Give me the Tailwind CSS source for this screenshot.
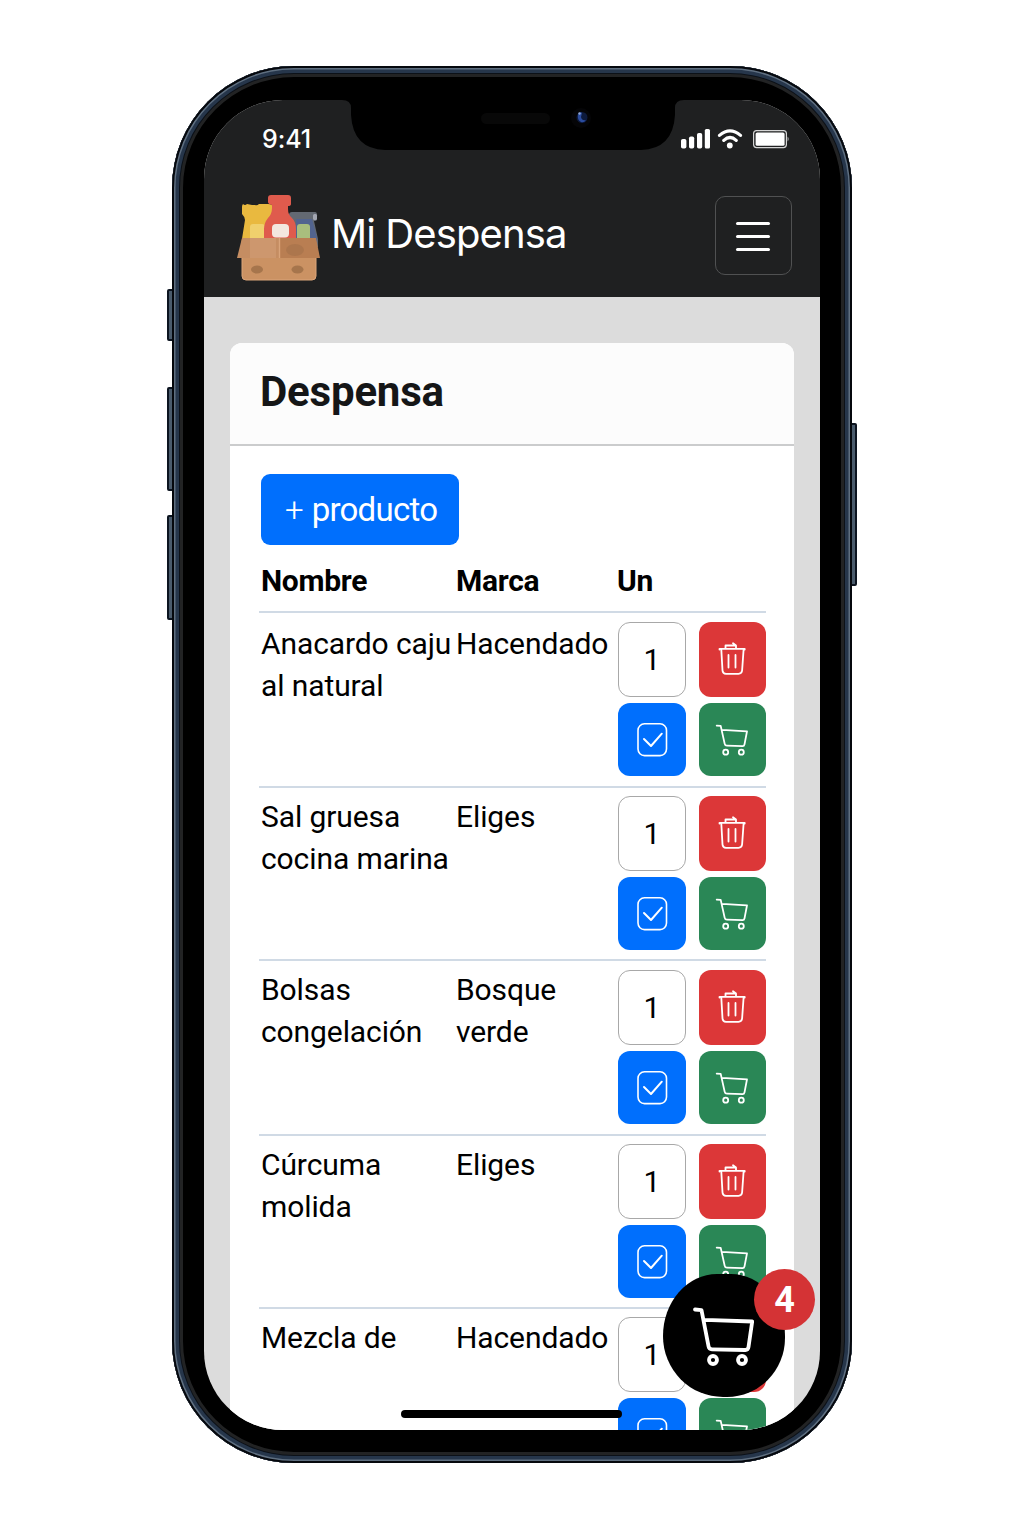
<!DOCTYPE html>
<html lang="es">
<head>
<meta charset="utf-8">
<title>Mi Despensa</title>
<script src="https://cdn.jsdelivr.net/npm/@tailwindcss/browser@4"></script>
</head>
<body class="bg-white">
<main class="flex h-[1536px] w-[1024px] justify-center overflow-hidden bg-white pt-[66px] font-['Roboto',sans-serif] text-black">
  <div class="relative h-[1397px] w-[680px]">
    <!-- side keys -->
    <div class="absolute left-[-5px] top-[223px] h-[52px] w-[8px] rounded-xs border-2 border-[#0c1420] bg-[#4a5b6c]"></div>
    <div class="absolute left-[-5px] top-[321px] h-[104px] w-[8px] rounded-xs border-2 border-[#0c1420] bg-[#4a5b6c]"></div>
    <div class="absolute left-[-5px] top-[449px] h-[105px] w-[8px] rounded-xs border-2 border-[#0c1420] bg-[#4a5b6c]"></div>
    <div class="absolute right-[-5px] top-[357px] h-[163px] w-[8px] rounded-xs border-2 border-[#0c1420] bg-[#4a5b6c]"></div>
    <!-- body -->
    <div class="relative h-full w-full rounded-[122px] bg-black px-8 pb-[33px] pt-[34px] shadow-[inset_0_0_0_2px_#05080d,inset_0_0_0_3.5px_#5f6f80,inset_0_0_0_7px_#26364b,inset_0_0_0_8px_#0c1118,inset_0_0_0_11px_#222324]">
      <div class="relative flex h-[1330px] flex-col overflow-hidden rounded-[79px] bg-[#dcdcdc]">
        <header class="flex h-[197px] shrink-0 flex-col bg-[#1f2021] text-white">
          <div class="flex h-[78px] items-center justify-between pl-[58px] pr-[30px]">
            <span class="pt-[1px] font-['Inter',sans-serif] text-[25px] font-medium leading-none tracking-[-0.1px]">9:41</span>
            <svg class="h-5 w-[110px]" viewBox="680 129 110 20" fill="#fff">
              <rect x="681" y="139" width="5.4" height="9.5" rx="1.8"/><rect x="689" y="136.5" width="5.2" height="12" rx="1.8"/><rect x="697" y="133" width="5.2" height="15.5" rx="1.8"/><rect x="704.8" y="129" width="5.2" height="19.5" rx="1.6"/>
              <path d="M719.5 135.4Q730 126.2 740.5 135.4M723.8 140.4Q730 134.6 736.2 140.4" fill="none" stroke="#fff" stroke-width="3.2" stroke-linecap="round"/>
              <circle cx="729.8" cy="145.5" r="2.9"/>
              <rect x="753.6" y="130.6" width="32.8" height="17" rx="3" fill="none" stroke="#d5d5d5" stroke-width="1.2"/><rect x="755.6" y="132.4" width="29" height="13.4" rx="1.6"/><path d="M787.6 136.6q2 2.4 0 5z" fill="#ccc"/>
            </svg>
          </div>
          <div class="flex h-[119px] items-start justify-between pl-8 pr-7">
            <div class="flex items-center pt-[16px]">
              <svg class="h-[88px] w-[84px]" viewBox="236 194 84 88">
                <path d="M289 215q0-3 3-3h23q2 0 2 3v4q0 2-3 2l4 18v8h-29z" fill="#636972"/>
                <path d="M296 219h16l5 19v4h-21z" fill="#52648f"/>
                <rect x="313" y="214" width="4" height="6" rx="1.5" fill="#a2a6b1"/>
                <path d="M243 204q2 2 4 0l5 1 3 0q2 1 4-1h9q5 0 5 4v7l-3 6v24h-29l4-25q0-3-3-6v-7q0-2 1-3z" fill="#e9b93f"/>
                <rect x="250" y="224" width="15" height="20" rx="3" fill="#f0d06d"/>
                <rect x="297" y="224" width="13" height="20" rx="3" fill="#a9be7d"/>
                <path d="M271 195h17q3 0 3 3v6q0 2-3 2v3q0 6 4 9 4 4 4 11v10h-32v-10q0-6 4-11 4-4 4-10v-3q-4-1-4-3v-4q0-3 3-3z" fill="#df5b4d"/>
                <rect x="272" y="224" width="17" height="13.500" rx="4" fill="#f3e7df"/>
                <path d="M242 256h74v20q0 4-4 4h-66q-4 0-4-4z" fill="#cb9263" stroke="#dba57a" stroke-width="1"/>
                <path d="M242 238h37v20h-42z" fill="#c58d62"/><path d="M279 238h37l4 20h-41z" fill="#b97e52"/>
                <path d="M250 238h26v20h-26z" fill="#d3a078" opacity=".55"/>
                <path d="M279.500 238v20" stroke="#d9a47a" stroke-width="1.4"/>
                <ellipse cx="295" cy="250" rx="9" ry="6" fill="#9d6c48" opacity=".45"/>
                <ellipse cx="257" cy="269.500" rx="6" ry="4" fill="#a6754c"/><ellipse cx="297.500" cy="269.500" rx="6" ry="4" fill="#a6754c"/>
              </svg>
              <span class="ml-[11px] -mt-[8px] font-['Inter',sans-serif] text-[40px] leading-none tracking-[-0.9px]">Mi Despensa</span>
            </div>
            <button class="mt-[18px] flex h-[79px] w-[77px] flex-col items-center justify-center gap-[10px] rounded-[10px] border border-[#505152] pt-[1px] pr-[1px]">
              <span class="h-[3px] w-[34px] rounded-full bg-white"></span><span class="h-[3px] w-[34px] rounded-full bg-white"></span><span class="h-[3px] w-[34px] rounded-full bg-white"></span>
            </button>
          </div>
        </header>
        <section class="mx-[26px] mt-[46px] flex h-[1100px] shrink-0 flex-col overflow-hidden rounded-t-xl bg-white">
          <h1 class="flex h-[103px] shrink-0 items-center border-b-2 border-[#cbcccd] bg-[#fcfcfc] pl-[30px] pb-[4px] text-[42px] font-bold leading-none tracking-[-0.2px] text-[#151617]">Despensa</h1>
          <div class="flex flex-col pl-[29px] pr-7 pt-7">
            <button class="ml-[2px] flex h-[71px] w-[198px] items-center rounded-[9px] bg-[#006ffd] pl-[24px] text-[33px] leading-none text-white"><span class="mr-[8px] font-light">+</span><span class="tracking-[-0.75px]">producto</span></button>
            <div class="flex h-[66px] items-center pt-[5px] text-[30px] font-bold leading-none tracking-[-0.3px]">
              <span class="w-[197px] pl-[2px]">Nombre</span><span class="w-[161px]">Marca</span><span>Un</span>
            </div>
            <div id="rows" class="flex flex-col text-[30px] leading-[42.4px] tracking-[-0.1px]"></div>
          </div>
        </section>
        <!-- display cut-out -->
        <svg class="absolute left-[138px] top-0 h-[51px] w-[342px]" viewBox="342 100 342 51">
          <path d="M342 99.500h342v.5q-9 0-9 8v7q-2 34-34 35H385q-32-1-34-35v-7q0-8-9-8z" fill="#000"/>
          <rect x="481" y="113" width="69" height="11" rx="5.500" fill="#080808"/>
          <circle cx="581" cy="118" r="10" fill="#050507"/><circle cx="582" cy="117.500" r="5.500" fill="#0d1a3c"/><path d="M578 115q2-4 4-2l-1 4q1 4 5 3-2 3-5 2-4-2-3-7z" fill="#2b4c9f"/><circle cx="579.500" cy="113.500" r="1.200" fill="#90a8d8"/>
        </svg>
        <div class="absolute left-[197px] top-[1310px] h-2 w-[221px] rounded-full bg-black"></div>
        <button class="absolute left-[459px] top-[1174px] h-[123px] w-[122px] rounded-[54px_54px_58px_60px/62px_62px_59px_61px] bg-black">
          <svg class="h-[123px] w-[122px]" viewBox="0 0 122 123" fill="none" stroke="#fff" stroke-width="3.800" stroke-linecap="round" stroke-linejoin="round"><path d="M32 35.500l6.500.7 7 36q.5 3 3.500 3.100l33 .7q3 .2 3.500-3l3.700-25.500-47.500-1.600"/><circle cx="50" cy="86" r="4"/><circle cx="79" cy="86" r="4"/></svg>
          <span class="absolute left-[91px] top-[-5px] flex size-[61px] items-center justify-center rounded-full bg-[#d43335] text-[36px] font-bold leading-none text-white">4</span>
        </button>
      </div>
    </div>
  </div>
</main>
<script>
const products = [
  ['Anacardo caju<br>al natural', 'Hacendado', 175],
  ['Sal gruesa<br>cocina marina', 'Eliges', 173],
  ['Bolsas<br>congelación', 'Bosque<br>verde', 175],
  ['Cúrcuma<br>molida', 'Eliges', 173],
  ['Mezcla de', 'Hacendado', 174]
];
document.getElementById('rows').innerHTML = products.map(([name, brand, height], i) => `
<div class="flex shrink-0 overflow-hidden border-t-2 border-[#d0dae5] whitespace-nowrap" style="height:${height}px">
  <div class="w-[197px] pl-[2px] pt-[10px] ${i ? '-mt-[2px]' : ''}"><span class="block">${name}</span></div>
  <div class="w-[162px] pt-[10px] ${i ? '-mt-[2px]' : ''}"><span class="block">${brand}</span></div>
  <div class="grid grid-cols-[68px_67px] grid-rows-[75px_73px] gap-x-[13px] gap-y-[6px] ${i % 2 || i == 4 ? 'pt-[8px]' : 'pt-[9px]'}">
    <div class="flex items-center justify-center rounded-[12px] border-[1.5px] border-[#a8a8a8] bg-white pt-[1px]">1</div>
    <div class="rounded-[12px] bg-[#dc3738]"><svg class="h-[75px] w-[67px]" viewBox="0 0 67 75" fill="none" stroke="#fff" stroke-width="1.800" stroke-linecap="round" stroke-linejoin="round"><path d="M20.500 27.500v-.7h25.200v.7M22.300 27.500l1.200 21q.2 3.300 3.500 3.300h12.500q3.300 0 3.600-3.300l1.500-21M26.500 26v-2.500h10.500v2.500M34 21.300l2.700 2M29.500 33v12.500M36.500 33v12.500"/></svg></div>
    <div class="rounded-[12px] bg-[#006ffd]"><svg class="h-[73px] w-[68px]" viewBox="0 0 68 73" fill="none" stroke="#fff" stroke-linecap="round" stroke-linejoin="round"><rect x="20" y="20.800" width="28.500" height="31.800" rx="6.500" stroke-width="1.600"/><path d="M26 36l7 7 10.800-12.300" stroke-width="2"/></svg></div>
    <div class="rounded-[12px] bg-[#2a8756]"><svg class="h-[73px] w-[67px]" viewBox="0 0 67 73" fill="none" stroke="#fff" stroke-width="1.800" stroke-linecap="round" stroke-linejoin="round"><path d="M17.700 22.600l4 .3 4 18q.4 1.800 2.200 1.800l15.600.4q1.700 0 2-1.800l2.500-12.900-25-1.600"/><circle cx="26.700" cy="49.200" r="2.500"/><circle cx="42.300" cy="49.200" r="2.500"/></svg></div>
  </div>
</div>`).join('');
</script>
</body>
</html>
